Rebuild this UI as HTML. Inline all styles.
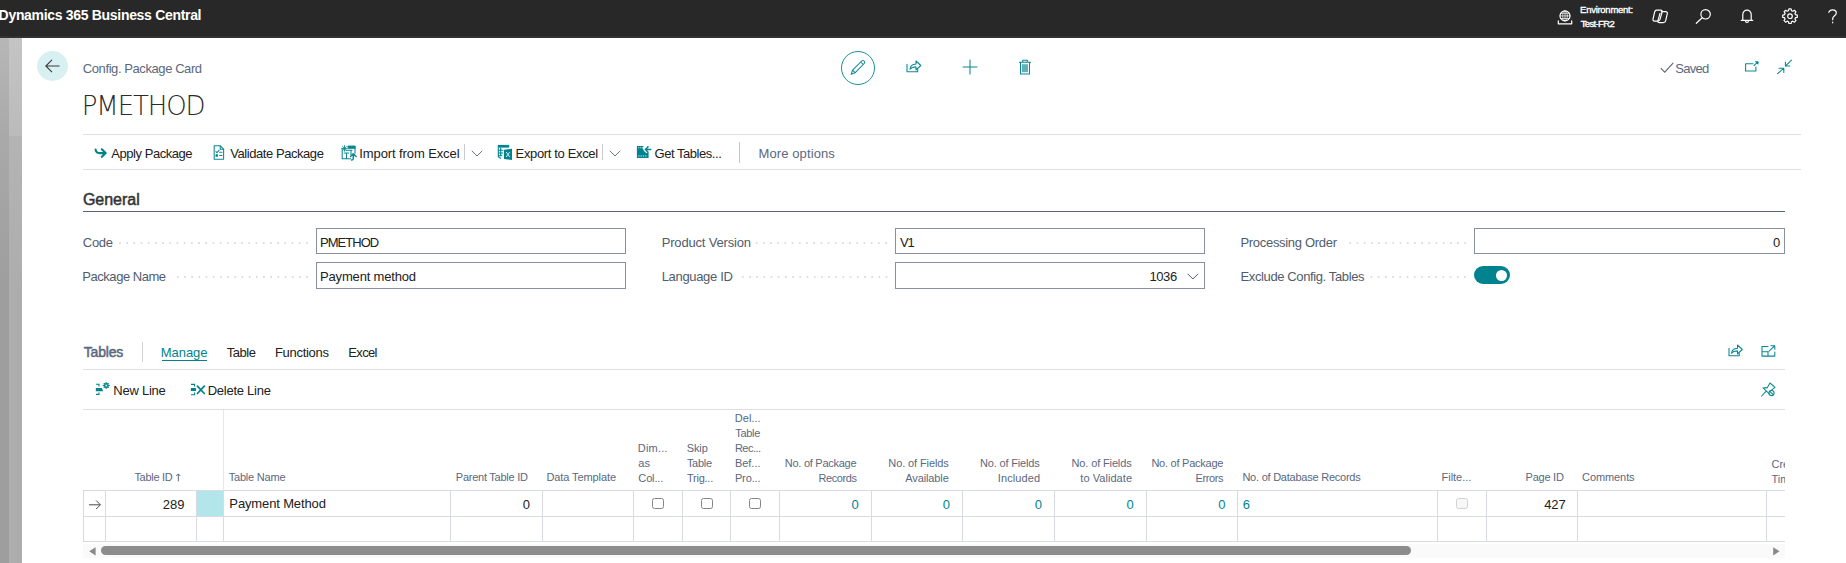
<!DOCTYPE html>
<html lang="en">
<head>
<meta charset="utf-8">
<title>Config. Package Card - PMETHOD</title>
<style>
html,body{margin:0;padding:0;}
body{width:1846px;height:563px;position:relative;overflow:hidden;background:#fff;font-family:"Liberation Sans",sans-serif;}
.t{position:absolute;white-space:nowrap;line-height:20px;}
.a{position:absolute;}
.hl{position:absolute;height:1px;background:#dcdfe4;}
.vl{position:absolute;width:1px;background:#d8dbe1;}
.inp{position:absolute;height:24px;width:308px;border:1px solid #8690a0;background:#fff;}
.dots{position:absolute;height:2px;background-image:radial-gradient(circle,#c2c7cf 0.5px,rgba(255,255,255,0) 0.9px);background-size:7.19px 2px;background-repeat:repeat-x;background-position:right top;}
.cb{position:absolute;width:9.6px;height:9.6px;border:1px solid #858585;border-radius:2.5px;background:#fff;}
svg{position:absolute;overflow:visible;}
.s{fill:none;stroke:#0a8793;stroke-width:1.05;stroke-linecap:round;stroke-linejoin:round;}
.w{fill:none;stroke:#fff;stroke-width:1.2;stroke-linecap:round;stroke-linejoin:round;}
</style>
</head>
<body>
<!-- top bar -->
<div class="a" style="left:0;top:0;width:1846px;height:38px;background:linear-gradient(#282828 36px,#2f2f2f 36px,#353535 38px);"></div>
<!-- left strip -->
<div class="a" style="left:0;top:38px;width:9px;height:525px;background:linear-gradient(#b7b7b7 0,#a9a9a9 100px,#9e9e9e 250px,#9e9e9e 100%);"></div>
<div class="a" style="left:9px;top:38px;width:13px;height:525px;background:linear-gradient(#c4c4c4 0,#bbbbbb 98px,#b4b4b4 98px,#adadad 250px,#adadad 100%);"></div>
<!-- back button -->
<div class="a" style="left:37px;top:51px;width:31px;height:30px;border-radius:50%;background:#d9f0f3;"></div>
<svg style="left:44px;top:58px" width="17" height="16" viewBox="0 0 17 16"><path d="M15.5 8H2M8 1.8 1.8 8 8 14.2" fill="none" stroke="#3a3a3a" stroke-width="1.1"/></svg>
<!--LINES-->
<!-- action bar lines -->
<div class="hl" style="left:83px;top:134px;width:1718px;"></div>
<div class="hl" style="left:83px;top:169px;width:1718px;"></div>
<div class="vl" style="left:464px;top:144px;height:16px;background:#c9cdd3;"></div>
<div class="vl" style="left:602px;top:144px;height:16px;background:#c9cdd3;"></div>
<div class="vl" style="left:739px;top:142px;height:21px;background:#c3c8cf;"></div>
<!-- general -->
<div class="hl" style="left:83px;top:211px;width:1702px;background:#566277;"></div>
<div class="inp" style="left:316px;top:228px;"></div>
<div class="inp" style="left:316px;top:262px;height:25px;"></div>
<div class="inp" style="left:895px;top:228px;"></div>
<div class="inp" style="left:895px;top:262px;height:25px;"></div>
<div class="inp" style="left:1474px;top:228px;width:309px;"></div>
<div class="dots" style="left:117.2px;top:241.5px;width:193.4px;"></div>
<div class="dots" style="left:173.9px;top:275.5px;width:136.7px;"></div>
<div class="dots" style="left:754px;top:241.5px;width:135.6px;"></div>
<div class="dots" style="left:739.5px;top:275.5px;width:150.1px;"></div>
<div class="dots" style="left:1346.8px;top:241.5px;width:121.8px;"></div>
<div class="dots" style="left:1368.1px;top:275.5px;width:100.5px;"></div>
<!-- toggle -->
<div class="a" style="left:1474px;top:266px;width:36px;height:18px;border-radius:9px;background:#00838f;"></div>
<div class="a" style="left:1496px;top:269.5px;width:11px;height:11px;border-radius:50%;background:#fff;"></div>
<!-- tables section -->
<div class="vl" style="left:142px;top:342px;height:20px;background:#d0d4da;"></div>
<div class="a" style="left:162px;top:360px;width:45px;height:1.4px;background:#00838f;"></div>
<div class="hl" style="left:83px;top:369px;width:1702px;"></div>
<div class="hl" style="left:83px;top:409px;width:1702px;"></div>
<!-- grid -->
<div class="vl" style="left:223px;top:410px;height:81px;background:#e6e8ec;"></div>
<div class="a" style="left:197px;top:491px;width:26px;height:25px;background:#b2e6ea;"></div>
<div class="hl" style="left:83px;top:490px;width:1702px;background:#d8dbe1;"></div>
<div class="hl" style="left:83px;top:516px;width:1702px;background:#d8dbe1;"></div>
<div class="hl" style="left:83px;top:541px;width:1702px;background:#d8dbe1;"></div>
<div class="vl" style="left:83px;top:490px;height:52px;"></div>
<div class="vl" style="left:105px;top:490px;height:52px;"></div>
<div class="vl" style="left:196px;top:490px;height:52px;"></div>
<div class="vl" style="left:223px;top:490px;height:52px;"></div>
<div class="vl" style="left:450px;top:490px;height:52px;"></div>
<div class="vl" style="left:542px;top:490px;height:52px;"></div>
<div class="vl" style="left:633px;top:490px;height:52px;"></div>
<div class="vl" style="left:682px;top:490px;height:52px;"></div>
<div class="vl" style="left:730px;top:490px;height:52px;"></div>
<div class="vl" style="left:779px;top:490px;height:52px;"></div>
<div class="vl" style="left:871px;top:490px;height:52px;"></div>
<div class="vl" style="left:962px;top:490px;height:52px;"></div>
<div class="vl" style="left:1054px;top:490px;height:52px;"></div>
<div class="vl" style="left:1146px;top:490px;height:52px;"></div>
<div class="vl" style="left:1237px;top:490px;height:52px;"></div>
<div class="vl" style="left:1437px;top:490px;height:52px;"></div>
<div class="vl" style="left:1486px;top:490px;height:52px;"></div>
<div class="vl" style="left:1577px;top:490px;height:52px;"></div>
<div class="vl" style="left:1766px;top:490px;height:52px;"></div>
<!-- checkboxes -->
<div class="cb" style="left:652px;top:497.5px;"></div>
<div class="cb" style="left:701px;top:497.5px;"></div>
<div class="cb" style="left:749px;top:497.5px;"></div>
<div class="cb" style="left:1456px;top:497.5px;border-color:#d2d2d2;background:#f7f7f7;"></div>
<!-- clipped last column header -->
<div class="a" style="left:1767px;top:440px;width:18px;height:50px;overflow:hidden;">
<span class="t" style="left:4.5px;top:13.7px;font-size:11px;color:#5a6880;">Created</span>
<span class="t" style="left:4.5px;top:28.7px;font-size:11px;color:#5a6880;">Time</span>
</div>
<!-- scrollbar -->
<div class="a" style="left:83px;top:544px;width:1702px;height:14px;background:#fafafa;"></div>
<div class="a" style="left:101px;top:546px;width:1310px;height:9px;border-radius:4.5px;background:#8c8c8c;"></div>
<svg style="left:88.6px;top:546.8px" width="7" height="9" viewBox="0 0 7 9"><path d="M6.6 0.2v8.200L0.200 4.300z" fill="#8a8a8a"/></svg>
<svg style="left:1773px;top:546.8px" width="7" height="9" viewBox="0 0 7 9"><path d="M0.2 0.2v8.200l6.400-4.100z" fill="#8a8a8a"/></svg>
<!--/LINES-->
<!--ICONS-->
<!-- header icons -->
<svg style="left:1557px;top:10px" width="16" height="15" viewBox="0 0 16 15"><g class="w" stroke-width="1.1"><circle cx="8" cy="5.9" r="5"/><path d="M3 5.9h10M8 0.9v10M3.900 3.300h8.200M3.900 8.500h8.200" stroke-width=".7"/><ellipse cx="8" cy="5.9" rx="2.3" ry="5" stroke-width=".7"/><path d="M1.3 10.8v3h13.4v-3"/></g></svg>
<svg style="left:1652px;top:9px" width="17" height="15" viewBox="0 0 17 15"><g class="w" stroke-width="1.1"><path d="M4.6 1.2h4.2c1 0 1.6.8 1.3 1.8L8 10.4c-.3 1-1.2 1.7-2.2 1.7H2.6c-1.2 0-1.9-.9-1.6-2l1.6-6.9c.3-1.2 1-2 2-2z"/><path d="M9.4 2.6h4.2c1.3 0 2 .9 1.7 2.1l-1.6 6.9c-.3 1.2-1.2 2-2.400 2H7.200c-1 0-1.600-.8-1.300-1.800l2.100-7.400"/></g></svg>
<svg style="left:1695px;top:8px" width="18" height="17" viewBox="0 0 18 17"><g class="w" stroke-width="1.3"><circle cx="10.600" cy="6.300" r="4.700"/><path d="M7.200 9.800 1.300 15.300"/></g></svg>
<svg style="left:1740px;top:9px" width="14" height="15" viewBox="0 0 14 15"><g class="w" stroke-width="1.2"><path d="M1.300 11.400h11.400M2.800 11.200V5.400a4.200 4.200 0 0 1 8.400 0v5.800M5.600 12.500a1.500 1.500 0 0 0 2.800 0"/></g></svg>
<svg style="left:1782px;top:8px" width="16" height="16" viewBox="0 0 16 16"><g class="w" stroke-width="1.2"><circle cx="8" cy="8.200" r="2.300"/><path d="M6.900 1h2.200l.4 1.800 1.300.55 1.600-1 1.550 1.550-1 1.600.55 1.300 1.800.4v2.200l-1.800.4-.55 1.300 1 1.600-1.550 1.550-1.600-1-1.300.55-.4 1.800H6.900l-.4-1.800-1.300-.55-1.600 1-1.550-1.550 1-1.600-.55-1.300L.7 9.400V7.200l1.800-.4.55-1.300-1-1.600L3.600 2.350l1.600 1 1.300-.55z" transform="translate(0 -.1)"/></g></svg>
<svg style="left:1827px;top:9px" width="12" height="15" viewBox="0 0 12 15"><g class="w" stroke-width="1.3"><path d="M1.800 3.300C2.400 1.600 3.900.8 5.600.8c2.100 0 3.700 1.300 3.700 3.100 0 1.500-.9 2.300-2 3.100-1.100.8-1.600 1.500-1.600 3.000v.7"/><path d="M5.700 13.200v.6"/></g></svg>
<!-- page top-centre icons -->
<div class="a" style="left:841px;top:51px;width:32px;height:32px;border:1.5px solid #1a8f9b;border-radius:50%;box-sizing:border-box;width:34px;height:34px;"></div>
<svg style="left:850px;top:60px" width="16" height="15" viewBox="0 0 16 15"><g class="s"><path d="M1.200 14.200l1.300-4L11.700 1c.7-.7 1.800-.7 2.500 0s.7 1.800 0 2.500L5 12.800zM2.700 10.100 5 12.600M10.700 2l2.500 2.500"/></g></svg>
<svg style="left:906px;top:60px" width="16" height="13" viewBox="0 0 16 13"><g class="s"><path d="M1 4.300v7.400h10.700v-2.200"/><path d="M4 9.300c.3-3 2.300-5 6-5.200V1l4.800 4.500L10 10V6.900C7.300 6.800 5.400 7.400 4 9.300z"/></g></svg>
<svg style="left:962px;top:59px" width="16" height="16" viewBox="0 0 16 16"><path class="s" d="M8 1v14M1 8h14" stroke-width="1.100"/></svg>
<svg style="left:1018px;top:59px" width="14" height="16" viewBox="0 0 14 16"><g class="s"><path d="M1.400 3.300h11.200M4.700 3.100V1.200h4.600v1.900M2.500 3.500V15h9V3.500"/><path d="M5 5.700v7M7 5.700v7M9 5.700v7" stroke-width="1.3"/></g></svg>
<!-- saved + window icons -->
<svg style="left:1660px;top:62px" width="14" height="11" viewBox="0 0 14 11"><path d="M.8 6.200 4.700 10.100 13.300.9" fill="none" stroke="#5a6880" stroke-width="1.100"/></svg>
<svg style="left:1744px;top:61px" width="16" height="12" viewBox="0 0 16 12"><g class="s"><path d="M9 2.800H1.600V10H11.900V6"/><path d="M10 4.600 13.300 1.300"/><path d="M11.700.700h2.300v2.300z" fill="#00838f"/></g></svg>
<svg style="left:1776px;top:59px" width="16" height="16" viewBox="0 0 16 16"><g class="s"><path d="M15.500 1.200 9.600 6.800M9.400 3V7H13.800M1.600 14.700 7.600 9.300M3 9.200H7.800V13.500"/></g></svg>
<!-- action bar icons -->
<svg style="left:94px;top:148px" width="13" height="10" viewBox="0 0 13 10"><path d="M1.600 1.500c.2 2.300 1.800 3.600 4.400 3.600h5.600M7.800 1.300l3.900 3.800-3.900 3.700" fill="none" stroke="#00808b" stroke-width="2.100" stroke-linecap="round" stroke-linejoin="round"/></svg>
<svg style="left:213px;top:145px" width="12" height="15" viewBox="0 0 12 15"><g class="s" stroke-width="1.200"><path d="M1.200.700h6l3.400 3.400v10.200H1.200zM7.200.900v3.300h3.300"/><path d="M2.900 6.600l1.100 1.100 2-2.400M6.600 7.200h2.400M6.600 10.500h2.400"/><path d="M3 9.800h1.500v1.500H3z" fill="#00838f"/></g></svg>
<svg style="left:341.400px;top:145px" width="16" height="16" viewBox="0 0 16 16"><g class="s" stroke-width="1.100"><path d="M1.200 3.500v10.300h8.300M7 1.200h7v7"/><path d="M7.200 1.300h6.800v2H7.200z" fill="#00838f"/><path d="M3.500 3.400 3.500.600M3.500 3.400 3.500 6.200M.700 3.400H6.300M1.600 1.500 5.400 5.300M5.400 1.500 1.600 5.300" stroke-width=".9"/><path d="M3.500 8h4M5.500 8.200v5.400M5 5.300h6M10 5.500v4" /><path d="M9.500 11.500l2.800-2.800 2.800 2.800M12.300 9v4.500c0 1-.6 1.600-1.800 1.600" stroke-width="1.500"/></g></svg>
<svg style="left:497px;top:144px" width="16" height="17" viewBox="0 0 16 17"><path d="M.8.900h11.400v2.700H.8z" fill="#00838f"/><path d="M1.300 3.500v9.300l2.600 1.700M1.300 6.300h5M1.300 9h5M1.300 11.700h4M3.700 3.600v8" fill="none" stroke="#00838f" stroke-width="1.100"/><path d="M7 5.700l8-.9v11.100l-8-.9z" fill="#00838f"/><path d="M9.200 8l3.500 5M12.700 8l-3.500 5" stroke="#cfeef0" stroke-width="1" fill="none"/></svg>
<svg style="left:636px;top:145px" width="16" height="14" viewBox="0 0 16 14"><path d="M.9 1h11.700v12H.9z" fill="#00838f"/><path d="M2.200 2.700h1.100M4.200 2.700h1.100M6.200 2.700h1M2.200 11h1.300M4.500 11h1.300M6.800 11h1.300M9.100 11h1.300" stroke="#d8f1f3" stroke-width="1.100" fill="none"/><path d="M16 4.500H9.600M11.600 1.900 9 4.500l2.600 2.600M10 .2 8 4.300" fill="none" stroke="#fff" stroke-width="3.400" stroke-linejoin="round"/><path d="M9.300 0 7.600 3.600" fill="none" stroke="#fff" stroke-width="1.300"/><path d="M14.800 4.500H9.600M11.400 2.400 9.300 4.500l2.100 2.100" fill="none" stroke="#00838f" stroke-width="1.400" stroke-linecap="round" stroke-linejoin="round"/></svg>
<!-- chevrons -->
<svg style="left:471px;top:150px" width="12" height="7" viewBox="0 0 12 7"><path d="M.8.800 6 6 11.200.8" fill="none" stroke="#6a7485" stroke-width="1"/></svg>
<svg style="left:609px;top:150px" width="12" height="7" viewBox="0 0 12 7"><path d="M.8.800 6 6 11.200.8" fill="none" stroke="#6a7485" stroke-width="1"/></svg>
<svg style="left:1187px;top:272.6px" width="12" height="7" viewBox="0 0 12 7"><path d="M.7.800 5.900 6 11.100.8" fill="none" stroke="#505c6d" stroke-width="1"/></svg>
<!-- tables section icons -->
<svg style="left:1728px;top:344px" width="16" height="13" viewBox="0 0 16 13"><g class="s"><path d="M1 4.300v7.400h10.200v-2.200"/><path d="M3.500 9.300c.3-3 2.300-4.800 6-5V1l4.800 4.500L9.500 10V6.900C6.800 6.800 4.900 7.400 3.500 9.300z"/></g></svg>
<svg style="left:1761px;top:345px" width="15" height="12" viewBox="0 0 15 12"><g class="s"><path d="M7 1.400H1v9.700h12.800V7M1 6.800h6v4.300"/><path d="M7.800 6.300 13.600.9M10 .700h3.800v3.600"/></g></svg>
<svg style="left:1761px;top:382px" width="15" height="15" viewBox="0 0 15 15"><g class="s" stroke-width="1"><path d="M.6 14 5 9.300M2 5.800l6.600 6.400M2.600 6.200c1.300-.7 2.600-.7 3.500-.300L9 1l5 4.400-4.200 3.200"/><circle cx="10.500" cy="11" r="2.600"/><path d="M8.700 9.300l3.600 3.400"/></g></svg>
<svg style="left:95px;top:382px" width="15" height="14" viewBox="0 0 15 14"><path d="M.8 6h6l1.300 3.300H.8z" fill="#00838f"/><path d="M1 2.200h3v2.200M1 12.400h3v-2" fill="none" stroke="#00838f" stroke-width="1.100"/><g stroke="#00838f" stroke-width="1" fill="none"><path d="M11.200 0v7M7.700 3.500h7M8.700 1l5 5M13.700 1l-5 5"/><path d="M9.300 1.600h3.800v3.800H9.300z" stroke-width=".9"/></g><circle cx="11.200" cy="3.500" r=".8" fill="#fff"/></svg>
<svg style="left:190px;top:383px" width="16" height="13" viewBox="0 0 16 13"><path d="M.8 5h4.400c.6 0 1 .6 1 1.400s-.4 1.500-1 1.500H.8z" fill="#00838f"/><path d="M1 1.400h3.600v2.200M1 11.700h3.600V9.500" fill="none" stroke="#00838f" stroke-width="1.100"/><path d="M7.400 3.200l6.900 7.300M14.300 3.200l-6.900 7.300" fill="none" stroke="#00808b" stroke-width="1.700" stroke-linecap="round"/></svg>
<!-- grid arrows -->
<svg style="left:175px;top:473px" width="7" height="9" viewBox="0 0 7 9"><path d="M3.300 8.300V1M1.200 3 3.300.9 5.400 3" fill="none" stroke="#5a6880" stroke-width="1"/></svg>
<svg style="left:88px;top:499.700px" width="14" height="10" viewBox="0 0 14 10"><path d="M1 4.800h11.200M8.100.500l4.300 4.300-4.300 4.300" fill="none" stroke="#4a4a4a" stroke-width="1"/></svg>
<!--/ICONS-->
<span class="t" style="left:-1.40px;top:5.00px;font-size:14px;color:#ffffff;font-weight:700;letter-spacing:-0.313px;">Dynamics 365 Business Central</span>
<span class="t" style="left:1580.08px;top:0.00px;font-size:9.5px;color:#ffffff;letter-spacing:-0.273px;-webkit-text-stroke:0.35px #fff;">Environment:</span>
<span class="t" style="left:1580.75px;top:14.00px;font-size:9.5px;color:#ffffff;letter-spacing:-0.654px;-webkit-text-stroke:0.35px #fff;">Test-FR2</span>
<span class="t" style="left:82.85px;top:59.00px;font-size:13px;color:#5a6880;letter-spacing:-0.419px;">Config. Package Card</span>
<span class="t" style="left:81.75px;top:96.00px;font-size:26px;color:#2a2a2a;letter-spacing:-1.103px;font-family:'DejaVu Sans Light','Liberation Sans',sans-serif;">PMETHOD</span>
<span class="t" style="left:1675.31px;top:59.00px;font-size:13px;color:#5a6880;letter-spacing:-0.733px;">Saved</span>
<span class="t" style="left:111.30px;top:144.00px;font-size:13px;color:#212121;letter-spacing:-0.453px;">Apply Package</span>
<span class="t" style="left:230.15px;top:144.00px;font-size:13px;color:#212121;letter-spacing:-0.431px;">Validate Package</span>
<span class="t" style="left:359.35px;top:144.00px;font-size:13px;color:#212121;letter-spacing:-0.104px;">Import from Excel</span>
<span class="t" style="left:515.62px;top:144.00px;font-size:13px;color:#212121;letter-spacing:-0.352px;">Export to Excel</span>
<span class="t" style="left:654.50px;top:144.00px;font-size:13px;color:#212121;letter-spacing:-0.454px;">Get Tables...</span>
<span class="t" style="left:758.62px;top:144.00px;font-size:13px;color:#5a6880;letter-spacing:0.092px;">More options</span>
<span class="t" style="left:82.88px;top:190.00px;font-size:16px;color:#333333;letter-spacing:-0.012px;-webkit-text-stroke:0.5px #333;">General</span>
<span class="t" style="left:82.81px;top:233.00px;font-size:13px;color:#505c6d;letter-spacing:-0.278px;">Code</span>
<span class="t" style="left:82.35px;top:267.00px;font-size:13px;color:#505c6d;letter-spacing:-0.468px;">Package Name</span>
<span class="t" style="left:661.69px;top:233.00px;font-size:13px;color:#505c6d;letter-spacing:-0.176px;">Product Version</span>
<span class="t" style="left:661.69px;top:267.00px;font-size:13px;color:#505c6d;letter-spacing:-0.326px;">Language ID</span>
<span class="t" style="left:1240.49px;top:233.00px;font-size:13px;color:#505c6d;letter-spacing:-0.310px;">Processing Order</span>
<span class="t" style="left:1240.49px;top:267.00px;font-size:13px;color:#505c6d;letter-spacing:-0.379px;">Exclude Config. Tables</span>
<span class="t" style="left:320.07px;top:233.00px;font-size:13px;color:#212121;letter-spacing:-0.973px;">PMETHOD</span>
<span class="t" style="left:320.07px;top:267.00px;font-size:13px;color:#212121;letter-spacing:-0.176px;">Payment method</span>
<span class="t" style="left:899.91px;top:233.00px;font-size:13px;color:#212121;letter-spacing:-1.000px;">V1</span>
<span class="t" style="left:1149.48px;top:267.00px;font-size:13px;color:#212121;letter-spacing:-0.414px;">1036</span>
<span class="t" style="left:1773.05px;top:233.00px;font-size:13px;color:#212121;">0</span>
<span class="t" style="left:83.66px;top:342.00px;font-size:14px;color:#5a6880;letter-spacing:-0.155px;-webkit-text-stroke:0.5px #5a6880;">Tables</span>
<span class="t" style="left:160.67px;top:343.00px;font-size:13px;color:#00838f;letter-spacing:-0.020px;">Manage</span>
<span class="t" style="left:226.75px;top:343.00px;font-size:13px;color:#212121;letter-spacing:-0.477px;">Table</span>
<span class="t" style="left:274.90px;top:343.00px;font-size:13px;color:#212121;letter-spacing:-0.281px;">Functions</span>
<span class="t" style="left:348.33px;top:343.00px;font-size:13px;color:#212121;letter-spacing:-0.658px;">Excel</span>
<span class="t" style="left:113.35px;top:381.00px;font-size:13px;color:#212121;letter-spacing:-0.255px;">New Line</span>
<span class="t" style="left:207.67px;top:381.00px;font-size:13px;color:#212121;letter-spacing:-0.247px;">Delete Line</span>
<span class="t" style="left:134.42px;top:467.00px;font-size:11px;color:#5a6880;letter-spacing:-0.282px;">Table ID</span>
<span class="t" style="left:228.77px;top:467.00px;font-size:11px;color:#5a6880;letter-spacing:-0.216px;">Table Name</span>
<span class="t" style="left:455.85px;top:467.00px;font-size:11px;color:#5a6880;letter-spacing:-0.252px;">Parent Table ID</span>
<span class="t" style="left:546.48px;top:467.00px;font-size:11px;color:#5a6880;letter-spacing:-0.094px;">Data Template</span>
<span class="t" style="left:637.82px;top:438.00px;font-size:11px;color:#5a6880;letter-spacing:0.178px;">Dim...</span>
<span class="t" style="left:638.37px;top:453.00px;font-size:11px;color:#5a6880;">as</span>
<span class="t" style="left:638.32px;top:468.00px;font-size:11px;color:#5a6880;letter-spacing:-0.130px;">Col...</span>
<span class="t" style="left:686.74px;top:438.00px;font-size:11px;color:#5a6880;letter-spacing:-0.120px;">Skip</span>
<span class="t" style="left:686.90px;top:453.00px;font-size:11px;color:#5a6880;letter-spacing:-0.278px;">Table</span>
<span class="t" style="left:686.90px;top:468.00px;font-size:11px;color:#5a6880;letter-spacing:-0.222px;">Trig...</span>
<span class="t" style="left:734.82px;top:408.00px;font-size:11px;color:#5a6880;letter-spacing:0.033px;">Del...</span>
<span class="t" style="left:735.31px;top:423.00px;font-size:11px;color:#5a6880;letter-spacing:-0.318px;">Table</span>
<span class="t" style="left:734.91px;top:438.00px;font-size:11px;color:#5a6880;letter-spacing:-0.509px;">Rec...</span>
<span class="t" style="left:734.91px;top:453.00px;font-size:11px;color:#5a6880;letter-spacing:-0.016px;">Bef...</span>
<span class="t" style="left:734.91px;top:468.00px;font-size:11px;color:#5a6880;letter-spacing:-0.132px;">Pro...</span>
<span class="t" style="left:784.85px;top:453.00px;font-size:11px;color:#5a6880;letter-spacing:-0.271px;">No. of Package</span>
<span class="t" style="left:818.41px;top:468.00px;font-size:11px;color:#5a6880;letter-spacing:-0.401px;">Records</span>
<span class="t" style="left:888.30px;top:453.00px;font-size:11px;color:#5a6880;letter-spacing:-0.101px;">No. of Fields</span>
<span class="t" style="left:905.36px;top:468.00px;font-size:11px;color:#5a6880;letter-spacing:-0.128px;">Available</span>
<span class="t" style="left:979.95px;top:453.00px;font-size:11px;color:#5a6880;letter-spacing:-0.165px;">No. of Fields</span>
<span class="t" style="left:997.83px;top:468.00px;font-size:11px;color:#5a6880;letter-spacing:0.085px;">Included</span>
<span class="t" style="left:1071.50px;top:453.00px;font-size:11px;color:#5a6880;letter-spacing:-0.132px;">No. of Fields</span>
<span class="t" style="left:1080.33px;top:468.00px;font-size:11px;color:#5a6880;letter-spacing:0.051px;">to Validate</span>
<span class="t" style="left:1151.41px;top:453.00px;font-size:11px;color:#5a6880;letter-spacing:-0.244px;">No. of Package</span>
<span class="t" style="left:1195.41px;top:468.00px;font-size:11px;color:#5a6880;letter-spacing:-0.361px;">Errors</span>
<span class="t" style="left:1242.41px;top:467.00px;font-size:11px;color:#5a6880;letter-spacing:-0.236px;">No. of Database Records</span>
<span class="t" style="left:1441.56px;top:467.00px;font-size:11px;color:#5a6880;letter-spacing:-0.036px;">Filte...</span>
<span class="t" style="left:1525.56px;top:467.00px;font-size:11px;color:#5a6880;letter-spacing:-0.239px;">Page ID</span>
<span class="t" style="left:1582.04px;top:467.00px;font-size:11px;color:#5a6880;letter-spacing:-0.087px;">Comments</span>
<span class="t" style="left:162.75px;top:495.00px;font-size:13px;color:#212121;letter-spacing:-0.037px;">289</span>
<span class="t" style="left:229.35px;top:494.00px;font-size:13px;color:#212121;letter-spacing:-0.135px;">Payment Method</span>
<span class="t" style="left:522.65px;top:495.00px;font-size:13px;color:#212121;">0</span>
<span class="t" style="left:851.55px;top:495.00px;font-size:13px;color:#00838f;">0</span>
<span class="t" style="left:942.86px;top:495.00px;font-size:13px;color:#00838f;">0</span>
<span class="t" style="left:1034.77px;top:495.00px;font-size:13px;color:#00838f;">0</span>
<span class="t" style="left:1126.46px;top:495.00px;font-size:13px;color:#00838f;">0</span>
<span class="t" style="left:1218.25px;top:495.00px;font-size:13px;color:#00838f;">0</span>
<span class="t" style="left:1242.85px;top:495.00px;font-size:13px;color:#00838f;">6</span>
<span class="t" style="left:1544.22px;top:495.00px;font-size:13px;color:#212121;letter-spacing:-0.151px;">427</span>
</body>
</html>
